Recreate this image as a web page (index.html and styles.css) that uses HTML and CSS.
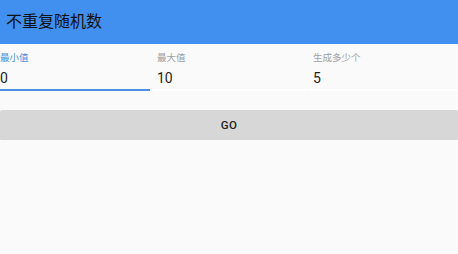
FILE: index.html
```html
<!DOCTYPE html>
<html lang="zh">
<head>
<meta charset="utf-8">
<title>不重复随机数</title>
<link rel="stylesheet" href="styles.css">
</head>
<body>
<header class="appbar">
  <h1 class="title">不重复随机数</h1>
</header>
<main class="content">
  <div class="fields">
    <div class="field field-focused">
      <label class="field-label">最小值</label>
      <div class="field-value">0</div>
    </div>
    <div class="field field-mid">
      <label class="field-label">最大值</label>
      <div class="field-value">10</div>
    </div>
    <div class="field field-last">
      <label class="field-label">生成多少个</label>
      <div class="field-value">5</div>
    </div>
  </div>
  <button class="go-button" type="button">GO</button>
</main>
</body>
</html>
```

FILE: styles.css
```css
html, body {
  margin: 0;
  padding: 0;
  background: #fafafa;
  font-family: Roboto, "Noto Sans CJK SC", "Noto Sans", sans-serif;
}

.appbar {
  height: 44px;
  background: #418fef;
  display: flex;
  align-items: center;
  padding-left: 6px;
  box-sizing: border-box;
}

.title {
  margin: 0;
  font-size: 16px;
  font-weight: 400;
  color: #111;
  line-height: 20px;
  padding-bottom: 1px;
}

.fields {
  display: grid;
  grid-template-columns: 150px 156px 1fr;
  column-gap: 1px;
  padding-top: 8px;
}

.field {
  display: flex;
  flex-direction: column;
  border-bottom: 2px solid #ffffff;
  padding-bottom: 1px;
}

.field-mid {
  padding-left: 6px;
}

.field-last {
  padding-left: 5px;
}

.field-label {
  font-size: 9.5px;
  line-height: 12px;
  color: #a0a0a0;
}

.field-value {
  margin-top: 4px;
  font-size: 14px;
  line-height: 20px;
  color: #1e1e1e;
}

.field-focused {
  border-bottom-color: #4a90e2;
}

.field-focused .field-label {
  color: #4a90e2;
}

.go-button {
  display: block;
  width: 100%;
  height: 30px;
  margin-top: 19px;
  border: none;
  border-radius: 2px;
  background: #d6d7d6;
  box-shadow: 0 1px 1px rgba(0, 0, 0, 0.12);
  font-family: Roboto, sans-serif;
  font-size: 11.5px;
  font-weight: 500;
  letter-spacing: 0.3px;
  color: #222;
  padding: 0;
}
```
